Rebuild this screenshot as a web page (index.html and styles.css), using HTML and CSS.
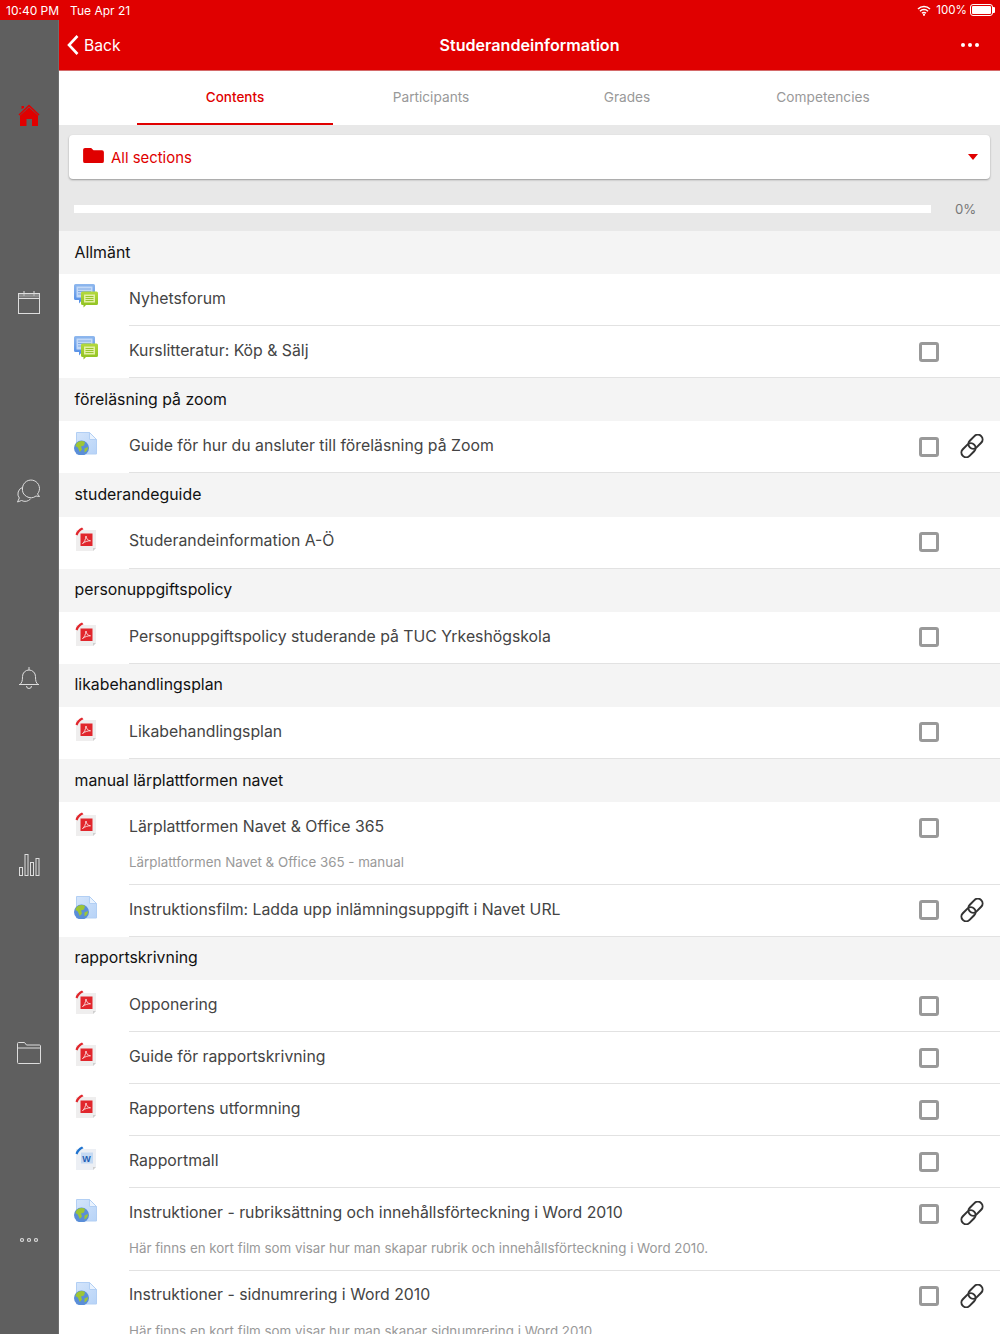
FILE: index.html
```html
<!DOCTYPE html>
<html lang="sv">
<head>
<meta charset="utf-8">
<title>Studerandeinformation</title>
<link rel="stylesheet" href="styles.css">
</head>
<body>
<svg class="defs" width="0" height="0" aria-hidden="true">
  <defs>
    <linearGradient id="gb" x1="0" y1="0" x2="0" y2="1"><stop offset="0" stop-color="#8fb8ee"/><stop offset="1" stop-color="#4f8be6"/></linearGradient>
    <linearGradient id="gg" x1="0" y1="0" x2="0" y2="1"><stop offset="0" stop-color="#b5d93e"/><stop offset="1" stop-color="#8cc01e"/></linearGradient>
    <linearGradient id="gp" x1="0" y1="0" x2="1" y2="1"><stop offset="0" stop-color="#d4e5fb"/><stop offset="1" stop-color="#b7d3f7"/></linearGradient>
    <symbol id="i-forum" viewBox="0 0 24 24">
      <path d="M1.500 0h18a1.500 1.500 0 0 1 1.500 1.500v13a1.500 1.500 0 0 1-1.500 1.500H8l-3 3.500V16H1.500A1.500 1.500 0 0 1 0 14.500v-13A1.500 1.500 0 0 1 1.500 0z" fill="url(#gb)"/>
      <rect x="2.500" y="2.500" width="16" height="11" fill="#c3d9f7"/>
      <path d="M4 5h13M4 7.500h13M4 10h7" stroke="#7fa9e4" stroke-width="1"/>
      <path d="M8.500 7.500h14a1.500 1.500 0 0 1 1.500 1.500v10.500a1.500 1.500 0 0 1-1.500 1.500H12l-2.500 2.500V21h-1A1.500 1.500 0 0 1 7 19.500V9a1.500 1.500 0 0 1 1.500-1.500z" fill="url(#gg)"/>
      <rect x="10" y="10.500" width="11" height="8" fill="#e3f0a6"/>
      <path d="M11.500 12.500h8M11.500 14.500h8M11.500 16.500h8" stroke="#98c62c" stroke-width="1"/>
    </symbol>
    <symbol id="i-web" viewBox="0 0 24 24">
      <path d="M2.500 1.500h13l7 7v14.500h-20z" fill="url(#gp)" stroke="#b2cff4"/>
      <path d="M15.500 1.500v7h7z" fill="#eaf3fe" stroke="#b2cff4"/>
      <circle cx="7.500" cy="17" r="7.500" fill="#5a8ed8"/>
      <path d="M4 11c2.500-1.300 5-1.300 7 0l-1 3.500-3 1 1 3-2.200 2.500-2-4.500L1.500 15c.3-1.800 1-3 2.500-4zM10.500 17.500l3.500-1.500c0 2.500-1 4.500-3.500 5.500z" fill="#9dc536"/>
    </symbol>
    <symbol id="i-pdf" viewBox="0 0 24 24">
      <path d="M2 3h20v18l-3 3H2z" fill="#efeeee"/>
      <path d="M19 24v-3h3z" fill="#cfcfcf"/>
      <rect x="6.500" y="6.500" width="12" height="12.500" fill="#e1262c"/>
      <path d="M8.500 16.500c2-1.200 3-4 3.500-7.500.3 2.800 1.800 4.500 4.500 4.800-3 0-5.500.9-8 2.700z" fill="none" stroke="#fbe0e0" stroke-width="0.900"/>
      <path d="M1.500 7.500C2.500 4.500 4.500 2 8 0.500l1.500 1.800C6.500 3.500 4.500 5.500 3.500 8.500z" fill="#e1262c"/>
    </symbol>
    <symbol id="i-word" viewBox="0 0 24 24">
      <path d="M2 3h20v18l-3 3H2z" fill="#eceff4"/>
      <path d="M19 24v-3h3z" fill="#cfcfcf"/>
      <rect x="7" y="6.500" width="12" height="11" fill="#c5d9f2"/>
      <text x="8.200" y="15.500" class="word-w">W</text>
      <path d="M1.500 7.500C2.500 4.500 4.500 2 8 0.500l1.500 1.800C6.500 3.500 4.500 5.500 3.500 8.500z" fill="#1f73cf"/>
    </symbol>
    <symbol id="i-link" viewBox="0 0 24 24">
      <g fill="none" stroke="#333" stroke-width="2">
        <rect x="7.500" y="3" width="16" height="9.500" rx="4.750" transform="rotate(-45 15.500 7.750)"/>
        <rect x="0.500" y="11.500" width="16" height="9.500" rx="4.750" transform="rotate(-45 8.500 16.250)"/>
      </g>
    </symbol>
  </defs>
</svg>

<header class="status">
  <div class="status-left"><span>10:40 PM</span><span>Tue Apr 21</span></div>
  <div class="status-right">
    <svg width="14" height="11" viewBox="0 0 14 11"><path d="M1 4a8.500 8.500 0 0 1 12 0M3 6.200a5.600 5.600 0 0 1 8 0M5 8.300a2.800 2.800 0 0 1 4 0" fill="none" stroke="#fff" stroke-width="1.500"/><circle cx="7" cy="9.800" r="1.100" fill="#fff"/></svg>
    <span class="pct">100%</span>
    <span class="battery"><i></i></span>
  </div>
</header>

<div class="app">
  <nav class="rail">
    <svg width="24" height="24" viewBox="0 1 24 24"><path d="M2 12L12 2.500 22 12" fill="none" stroke="#e00000" stroke-width="1.500"/><path d="M4.500 6V3h2.500v2z" fill="#e00000"/><path d="M3 12.500L12 4.500l9 8V23h-6v-7H9.500v7H3z" fill="#e00000"/></svg>
    <svg width="24" height="24" viewBox="0 0 24 24" fill="none" stroke="#ddd" stroke-width="1"><rect x="1.500" y="2.500" width="21" height="20"/><path d="M1.500 7.500h21M7 0v5M17 0v5"/><rect x="2" y="3" width="20" height="3.500" fill="#aaa" stroke="none" opacity=".6"/></svg>
    <svg width="26" height="26" viewBox="0 0 26 26" fill="none" stroke="#ddd" stroke-width="1"><path d="M6.500 10a8.500 8.500 0 1 1 15 6l2 2.500-3.500-.5a8.500 8.500 0 0 1-13.500-8z"/><path d="M6.300 9.500a6.800 6.800 0 0 0-3 10.500L1.500 24l4-1.500a8 8 0 0 0 9-1.500"/></svg>
    <svg width="22" height="24" viewBox="0 0 22 24" fill="none" stroke="#ddd" stroke-width="1"><path d="M2 18.500c2-2 2.500-3.500 2.500-8a6.500 6.500 0 0 1 13 0c0 4.500.5 6 2.500 8z"/><path d="M1 18.500h20M8.500 20a2.500 2.500 0 0 0 5 0M11 1v3"/></svg>
    <svg width="24" height="24" viewBox="0 0 24 24" fill="none" stroke="#ddd" stroke-width="1"><rect x="2.500" y="14.500" width="3" height="8"/><rect x="8" y="1.500" width="3" height="21"/><rect x="13.500" y="9.500" width="3" height="13"/><rect x="19" y="5.500" width="3" height="17"/></svg>
    <svg width="26" height="24" viewBox="0 0 26 24" fill="none" stroke="#ddd" stroke-width="1"><path d="M1.500 5V2.500a1 1 0 0 1 1-1h6l2 2.500h13a1 1 0 0 1 1 1V21.500a1 1 0 0 1-1 1h-21a1 1 0 0 1-1-1z"/><path d="M1.500 7h23"/></svg>
    <svg width="20" height="6" viewBox="0 0 20 6" fill="none" stroke="#ddd" stroke-width="1.200"><circle cx="3" cy="3" r="1.500"/><circle cx="10" cy="3" r="1.500"/><circle cx="17" cy="3" r="1.500"/></svg>
  </nav>

  <main class="main">
    <div class="topbar">
      <div class="back">
        <svg width="14" height="22" viewBox="0 0 14 22"><path d="M11.500 2L3 11l8.500 9" fill="none" stroke="#fff" stroke-width="2.600"/></svg>
        <span>Back</span>
      </div>
      <h1 class="title">Studerandeinformation</h1>
      <div class="more"><i></i><i></i><i></i></div>
    </div>

    <div class="tabs">
      <div class="tab tab-active">Contents</div>
      <div class="tab">Participants</div>
      <div class="tab">Grades</div>
      <div class="tab">Competencies</div>
    </div>

    <div class="filter">
      <div class="select">
        <svg width="21" height="17" viewBox="0 0 22 18"><path d="M2 1h6.500l2.500 2.500h9a2 2 0 0 1 2 2V15a2 2 0 0 1-2 2H2a2 2 0 0 1-2-2V3a2 2 0 0 1 2-2z" fill="#e00000"/></svg>
        <span class="select-label">All sections</span>
        <span class="caret"></span>
      </div>
      <div class="progress">
        <div class="progress-bar"></div>
        <span class="progress-value">0%</span>
      </div>
    </div>

    <div class="section">Allmänt</div>
    <div class="row"><svg class="ri"><use href="#i-forum"/></svg><div class="rb"><div class="rt"><span class="name">Nyhetsforum</span></div></div></div>
    <div class="row"><svg class="ri"><use href="#i-forum"/></svg><div class="rb"><div class="rt"><span class="name">Kurslitteratur: Köp &amp; Sälj</span><span class="check"></span></div></div></div>

    <div class="section">föreläsning på zoom</div>
    <div class="row"><svg class="ri"><use href="#i-web"/></svg><div class="rb"><div class="rt"><span class="name">Guide för hur du ansluter till föreläsning på Zoom</span><span class="check"></span><svg class="lk"><use href="#i-link"/></svg></div></div></div>

    <div class="section">studerandeguide</div>
    <div class="row"><svg class="ri"><use href="#i-pdf"/></svg><div class="rb"><div class="rt"><span class="name">Studerandeinformation A-Ö</span><span class="check"></span></div></div></div>

    <div class="section">personuppgiftspolicy</div>
    <div class="row"><svg class="ri"><use href="#i-pdf"/></svg><div class="rb"><div class="rt"><span class="name">Personuppgiftspolicy studerande på TUC Yrkeshögskola</span><span class="check"></span></div></div></div>

    <div class="section">likabehandlingsplan</div>
    <div class="row"><svg class="ri"><use href="#i-pdf"/></svg><div class="rb"><div class="rt"><span class="name">Likabehandlingsplan</span><span class="check"></span></div></div></div>

    <div class="section">manual lärplattformen navet</div>
    <div class="row"><svg class="ri"><use href="#i-pdf"/></svg><div class="rb"><div class="rt"><span class="name">Lärplattformen Navet &amp; Office 365</span><span class="check"></span></div><p class="desc">Lärplattformen Navet &amp; Office 365 - manual</p></div></div>
    <div class="row"><svg class="ri"><use href="#i-web"/></svg><div class="rb"><div class="rt"><span class="name">Instruktionsfilm: Ladda upp inlämningsuppgift i Navet URL</span><span class="check"></span><svg class="lk"><use href="#i-link"/></svg></div></div></div>

    <div class="section">rapportskrivning</div>
    <div class="row"><svg class="ri"><use href="#i-pdf"/></svg><div class="rb"><div class="rt"><span class="name">Opponering</span><span class="check"></span></div></div></div>
    <div class="row"><svg class="ri"><use href="#i-pdf"/></svg><div class="rb"><div class="rt"><span class="name">Guide för rapportskrivning</span><span class="check"></span></div></div></div>
    <div class="row"><svg class="ri"><use href="#i-pdf"/></svg><div class="rb"><div class="rt"><span class="name">Rapportens utformning</span><span class="check"></span></div></div></div>
    <div class="row"><svg class="ri"><use href="#i-word"/></svg><div class="rb"><div class="rt"><span class="name">Rapportmall</span><span class="check"></span></div></div></div>
    <div class="row"><svg class="ri"><use href="#i-web"/></svg><div class="rb"><div class="rt"><span class="name">Instruktioner - rubriksättning och innehållsförteckning i Word 2010</span><span class="check"></span><svg class="lk"><use href="#i-link"/></svg></div><p class="desc">Här finns en kort film som visar hur man skapar rubrik och innehållsförteckning i Word 2010.</p></div></div>
    <div class="row"><svg class="ri"><use href="#i-web"/></svg><div class="rb"><div class="rt"><span class="name">Instruktioner - sidnumrering i Word 2010</span><span class="check"></span><svg class="lk"><use href="#i-link"/></svg></div><p class="desc">Här finns en kort film som visar hur man skapar sidnumrering i Word 2010</p></div></div>
  </main>
</div>
</body>
</html>
```
FILE: styles.css
```css
* { box-sizing: border-box; }
html, body { margin: 0; height: 1334px; overflow: hidden; }
body { font-family: Inter, "Noto Sans", sans-serif; background: #fff; color: #333; }
.defs { position: absolute; }
.word-w { font: 700 9px "Liberation Sans", sans-serif; fill: #1f5fb5; }

.status { height: 20px; background: #e00000; color: #fff; display: flex; justify-content: space-between; align-items: center; padding: 0 6px; font-size: 12px; }
.status-left { display: flex; gap: 11px; }
.status-right { display: flex; align-items: center; gap: 3px; }
.pct { margin-left: 2px; font-size: 11.600px; }
.battery { width: 23px; height: 12px; border: 1px solid #fff; border-radius: 3px; padding: 1px; margin-right: 1px; position: relative; display: block; }
.battery::after { content: ""; position: absolute; right: -3px; top: 2px; width: 2px; height: 6px; background: #fff; border-radius: 0 1px 1px 0; }
.battery i { display: block; height: 100%; background: #fff; border-radius: 1px; }

.app { display: flex; height: 1314px; }
.rail { width: 59px; flex: none; background: #5f5f5f; border-right: 1px solid #6e6e6e; padding-top: 2px; display: grid; grid-auto-rows: 1fr; justify-items: center; align-items: center; }
.main { flex: 1; min-width: 0; overflow: hidden; }

.topbar { height: 51px; background: #e00000; border-bottom: 1px solid #d46a6a; display: flex; align-items: center; justify-content: center; position: relative; color: #fff; }
.back { position: absolute; left: 7px; top: 14px; display: flex; align-items: center; gap: 4px; font-size: 15.700px; }
.title { margin: 0; font-size: 16.100px; font-weight: 600; }
.more { position: absolute; right: 21px; top: 23px; display: flex; gap: 3px; }
.more i { width: 4px; height: 4px; border-radius: 50%; background: #fff; }

.tabs { height: 54px; display: flex; justify-content: center; background: #fff; padding-right: 1px; }
.tab { width: 196px; display: flex; align-items: center; justify-content: center; font-size: 13.700px; color: #999; padding-bottom: 3px; }
.tab-active { color: #e00000; font-weight: 500; font-size: 13.500px; padding-bottom: 1px; border-bottom: 2px solid #e00000; }

.filter { background: #e8e8e8; height: 106px; padding: 10px 10px 0; }
.select { height: 44px; background: #fff; border-radius: 4px; box-shadow: 0 1px 2px rgba(0,0,0,.35); display: flex; align-items: center; padding: 0 12px 0 14px; color: #e00000; font-size: 14.900px; }
.select svg { margin-top: -3px; }
.select-label { margin-left: 7px; padding-top: 2px; flex: 1; }
.caret { width: 0; height: 0; border: 5.500px solid transparent; border-top: 6px solid #e00000; border-bottom: 0; }
.progress { display: flex; align-items: center; padding-left: 5px; margin-top: 22px; }
.progress-bar { width: 857px; height: 8px; background: #fff; }
.progress-value { margin-left: 24px; font-size: 13.200px; color: #777; }

.section { height: 43.200px; background: #f4f4f4; color: #111; font-size: 15.850px; padding: 0 15.500px 1px; display: flex; align-items: center; }
.row { display: flex; background: #fff; }
.ri { width: 24px; height: 24px; flex: none; margin: 10px 31px 0 15px; }
.rb { flex: 1; min-width: 0; border-bottom: 1px solid #e2e2e2; }
.rt { height: 51px; display: flex; align-items: center; padding-bottom: 2.500px; position: relative; }
.name { flex: 1; font-size: 15.800px; color: #444; }
.check { position: absolute; left: 789.500px; top: 15.500px; width: 20px; height: 20px; border: 3px solid #999; border-radius: 3px; }
.lk { position: absolute; left: 831px; top: 13px; width: 24px; height: 24px; }
.desc { margin: -0.700px 0 0; height: 31.400px; font-size: 13.350px; color: #999; line-height: 20px; }
```
